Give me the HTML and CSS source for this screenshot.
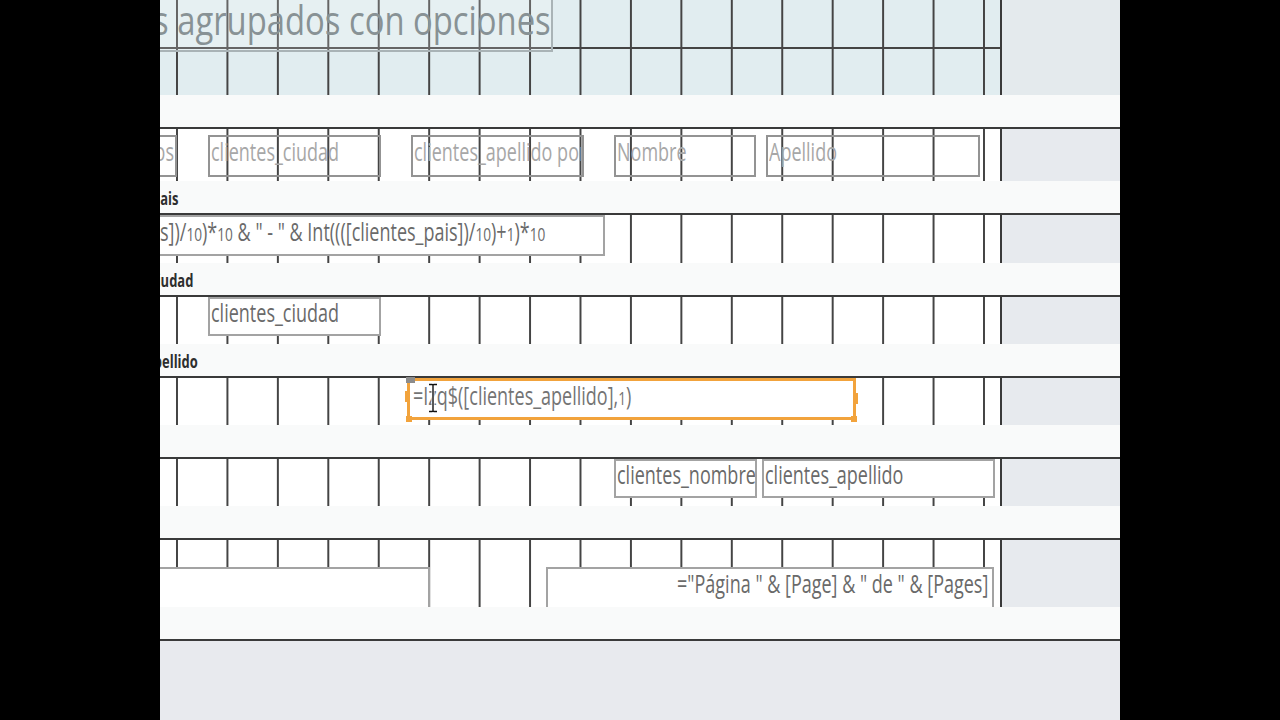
FILE: index.html
```html
<!DOCTYPE html>
<html lang="es">
<head>
    <meta charset="UTF-8">
    <title>Informe - Vista Diseño</title>
    <link rel="stylesheet" href="styles.css">
</head>
<body>
    <div class="frame">

        <!-- Encabezado del informe -->
        <div class="sec sec-head">
            <div class="grid grid-head">
                <div class="title"><span class="t">s agrupados con opciones</span></div>
            </div>
            <div class="beyond beyond-head"></div>
        </div>
        <div class="bar"></div>

        <!-- Encabezado de página -->
        <div class="sec sec-labels">
            <div class="grid">
                <div class="label label-end" style="width: 17px;"><span class="t t-right">os</span></div>
                <div class="label" style="margin-left: 31px; width: 173px;"><span class="t">clientes_ciudad</span></div>
                <div class="label" style="margin-left: 30px; width: 173px;"><span class="t">clientes_apellido por</span></div>
                <div class="label" style="margin-left: 30px; width: 142px;"><span class="t">Nombre</span></div>
                <div class="label" style="margin-left: 10px; width: 214px;"><span class="t">Apellido</span></div>
            </div>
            <div class="beyond"></div>
        </div>
        <div class="bar"><span class="bar-name" style="margin-left: -8px;">pais</span></div>

        <!-- Encabezado clientes_pais -->
        <div class="sec sec-s3">
            <div class="grid">
                <div class="box box-pais"><span class="t">s])/<span class="os">10</span>)*<span class="os">10</span> &amp; " - " &amp; Int((([clientes_pais])/<span class="os">10</span>)+<span class="os">1</span>)*<span class="os">10</span></span></div>
            </div>
            <div class="beyond"></div>
        </div>
        <div class="bar"><span class="bar-name" style="margin-left: -10px;">ciudad</span></div>

        <!-- Encabezado clientes_ciudad -->
        <div class="sec">
            <div class="grid">
                <div class="box box-ciudad"><span class="t">clientes_ciudad</span></div>
            </div>
            <div class="beyond"></div>
        </div>
        <div class="bar"><span class="bar-name" style="margin-left: -14px;">apellido</span></div>

        <!-- Encabezado clientes_apellido -->
        <div class="sec">
            <div class="grid">
                <div class="box box-sel">
                    <span class="t">=Izq$([clientes_apellido],<span class="os">1</span>)</span>
                    <span class="handle move"></span>
                    <span class="handle mid-l"></span>
                    <span class="handle mid-r"></span>
                    <span class="handle bot-l"></span>
                    <span class="handle bot-r"></span>
                    <svg class="ibeam" width="12" height="30" viewBox="0 0 12 30">
                        <path d="M2 1.5h3.2q0.8 0 0.8 1q0-1 0.8-1H10M6 2.5v25M2 28.5h3.2q0.8 0 0.8-1q0 1 0.8 1H10" fill="none" stroke="#fff" stroke-width="3"/>
                        <path d="M2 1.5h3.2q0.8 0 0.8 1q0-1 0.8-1H10M6 2.5v25M2 28.5h3.2q0.8 0 0.8-1q0 1 0.8 1H10" fill="none" stroke="#111" stroke-width="1.4"/>
                    </svg>
                </div>
            </div>
            <div class="beyond"></div>
        </div>
        <div class="bar"></div>

        <!-- Detalle -->
        <div class="sec">
            <div class="grid">
                <div class="box box-det" style="margin-left: 454px; width: 143px;"><span class="t">clientes_nombre</span></div>
                <div class="box box-det" style="margin-left: 5px; width: 233px;"><span class="t">clientes_apellido</span></div>
            </div>
            <div class="beyond"></div>
        </div>
        <div class="bar"></div>

        <!-- Pie de página -->
        <div class="sec sec-foot">
            <div class="grid grid-foot">
                <div class="box box-now"></div>
                <div class="box box-page"><span class="t t-right">="Página " &amp; [Page] &amp; " de " &amp; [Pages]</span></div>
            </div>
            <div class="beyond"></div>
        </div>
        <div class="bar"></div>

        <div class="outside"></div>
    </div>
</body>
</html>
```

FILE: styles.css
```css
body {
    margin: 0;
    background-color: #000;
    font-family: "Open Sans", "Noto Sans", sans-serif;
    color: #6a6a6a;
}

.frame {
    width: 960px;
    height: 720px;
    margin: 0 auto;
    overflow: hidden;
    background-color: #f9fafa;
}

/* secciones del informe */
.sec {
    display: flex;
    box-sizing: border-box;
    height: 49px;
    border-top: 2px solid #3a3a3a;
}

.sec-head {
    height: 95px;
    border-top: none;
}

.sec-labels {
    height: 54px;
}

.sec-s3 {
    height: 50px;
}

.sec-foot {
    height: 69px;
}

.grid {
    width: 840px;
    border-right: 2px solid #3a3a3a;
    background-color: #fff;
    background-image: linear-gradient(to right, #444 2px, transparent 2px);
    background-size: 50.44px 100%;
    background-position: 16px 0;
    background-repeat: repeat-x;
    display: flex;
    align-items: flex-start;
}

.grid-head {
    background-color: #e1edf0;
    background-image: linear-gradient(#444, #444), linear-gradient(to right, #444 2px, transparent 2px);
    background-size: 100% 2px, 50.44px 100%;
    background-position: 0 47px, 16px 0;
    background-repeat: no-repeat, repeat-x;
}

.sec-labels .grid {
    padding-top: 6px;
}

.grid-foot {
    padding-top: 27px;
}

.beyond {
    flex: 1;
    background-color: #e7eaee;
}

.beyond-head {
    background-color: #e4eaed;
}

/* barras de seccion */
.bar {
    height: 32px;
    box-sizing: border-box;
    padding-top: 7px;
    overflow: hidden;
    white-space: nowrap;
}

.bar-name {
    display: inline-block;
    font-size: 18px;
    font-weight: bold;
    line-height: 20px;
    color: #2e2e2e;
    transform: scaleX(0.72);
    transform-origin: 0 0;
}

.outside {
    height: 84px;
    box-sizing: border-box;
    border-top: 2px solid #3a3a3a;
    border-bottom: 2px solid #c9cdd2;
    background-color: #e8eaee;
}

/* texto comprimido como en el video */
.t {
    display: inline-block;
    white-space: nowrap;
    transform: scaleX(0.72);
    transform-origin: 0 0;
}

.t-right {
    transform-origin: 100% 0;
}

.os {
    font-size: 0.76em;
}

.title {
    width: 393px;
    height: 52px;
    box-sizing: border-box;
    border-right: 2px solid #a9b3b6;
    border-bottom: 2px solid #a9b3b6;
    background-color: rgba(255, 255, 255, 0.18);
    overflow: hidden;
    font-size: 40px;
    line-height: 40px;
    color: #889295;
}

.title .t {
    margin-left: -7px;
    transform: scaleX(0.82);
}

/* etiquetas */
.label {
    box-sizing: border-box;
    height: 42px;
    border: 2px solid #939393;
    overflow: hidden;
    font-size: 25px;
    line-height: 29px;
    padding-left: 1px;
    color: #a7a7a7;
}

.label-end {
    border-left: none;
    display: flex;
    justify-content: flex-end;
    padding: 0 1px 0 0;
}

/* cuadros de texto */
.box {
    box-sizing: border-box;
    border: 2px solid #a3a3a3;
    background-color: #fff;
    overflow: hidden;
    font-size: 25px;
    line-height: 26px;
    padding-left: 1px;
}

.box-pais {
    width: 445px;
    height: 41px;
    border-left: none;
    line-height: 28px;
}

.box-pais .t {
    margin-left: -1px;
}

.box-ciudad {
    margin-left: 48px;
    width: 173px;
    height: 39px;
}

.box-sel {
    position: relative;
    margin-left: 247px;
    width: 449px;
    height: 42px;
    border: 3px solid #f2a33c;
    padding-left: 3px;
    line-height: 28px;
    overflow: visible;
    color: #747474;
}

.box-det {
    height: 39px;
}

.box-now {
    width: 270px;
    height: 40px;
    border-left: none;
    border-bottom: none;
}

.box-page {
    margin-left: 116px;
    width: 448px;
    height: 40px;
    border-bottom: none;
    display: flex;
    justify-content: flex-end;
    padding: 0 4px 0 0;
    line-height: 29px;
}

/* manejadores de seleccion */
.handle {
    position: absolute;
    background-color: #f2a33c;
}

.move {
    left: -4px;
    top: -4px;
    width: 9px;
    height: 6px;
    background-color: #8c8c8c;
}

.mid-l {
    left: -5px;
    top: 10px;
    width: 5px;
    height: 11px;
}

.mid-r {
    right: -5px;
    top: 12px;
    width: 5px;
    height: 11px;
}

.bot-l {
    left: -4px;
    bottom: -5px;
    width: 6px;
    height: 6px;
}

.bot-r {
    right: -4px;
    bottom: -5px;
    width: 6px;
    height: 6px;
}

.ibeam {
    position: absolute;
    left: 17px;
    top: 2px;
}
```
